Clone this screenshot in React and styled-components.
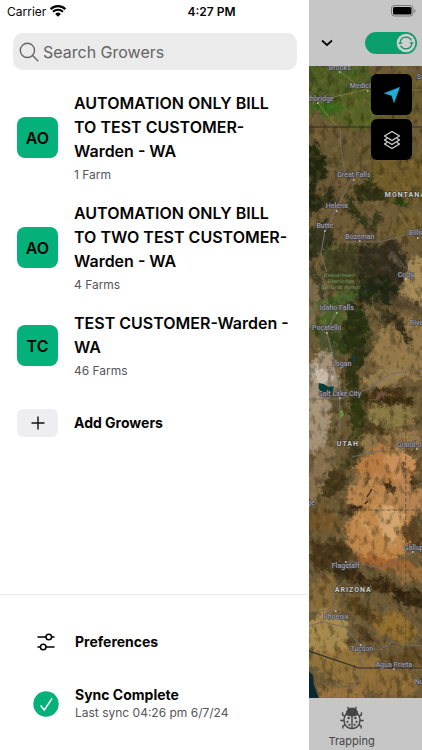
import React, { useState } from "react";
import styled, { createGlobalStyle } from "styled-components";

const growers = [
  { initials: "AO", name: "AUTOMATION ONLY BILL TO TEST CUSTOMER-Warden - WA", farms: "1 Farm" },
  { initials: "AO", name: "AUTOMATION ONLY BILL TO TWO TEST CUSTOMER-Warden - WA", farms: "4 Farms" },
  { initials: "TC", name: "TEST CUSTOMER-Warden - WA", farms: "46 Farms" },
];

// [name, x, y, text-anchor]
const cities = [
  ["Brooks", 31, 4, "middle"],
  ["Lethbridge", 25, 35, "end"],
  ["Medicine Hat", 41, 22, "start"],
  ["Swift Current", 108, 13, "start"],
  ["Great Falls", 45, 111, "middle"],
  ["Helena", 28, 142, "middle"],
  ["Butte", 16, 162, "middle"],
  ["Bozeman", 51, 173, "middle"],
  ["Billings", 100, 169, "start"],
  ["Cody", 97, 211, "middle"],
  ["Idaho Falls", 28, 244, "middle"],
  ["Pocatello", 18, 264, "middle"],
  ["Riverton", 101, 259, "start"],
  ["Logan", 33, 300, "middle"],
  ["Salt Lake City", 31, 330, "middle"],
  ["Grand Junction", 88, 381, "start"],
  ["St. George", 6, 439, "end"],
  ["Gallup", 95, 484, "start"],
  ["Flagstaff", 37, 502, "middle"],
  ["Phoenix", 27, 553, "middle"],
  ["Tucson", 53, 585, "middle"],
  ["Agua Prieta", 85, 601, "middle"],
  ["Nuevo Casas", 106, 618, "start"],
];

const states = [
  ["MONTANA", 76, 131],
  ["UTAH", 28, 380],
  ["ARIZONA", 26, 526],
];

const dots = [
  [31, 6], [9, 37], [59, 25], [45, 114], [28, 145], [16, 165], [51, 175], [109, 172],
  [97, 213], [28, 247], [18, 267], [32, 302], [31, 332], [108, 383], [104, 486],
  [37, 496], [27, 545], [52, 579], [85, 603],
];

// [cx, cy, rx, ry, fill, opacity, rotation]
const terrain = [
  [22, 16, 44, 28, "#4f5e24", 1, 0],
  [50, 46, 34, 18, "#546224", 0.9, 0],
  [95, 30, 30, 30, "#675a2c", 0.9, 0],
  [18, 42, 16, 5, "#336a1a", 0.9, 0],
  [40, 8, 12, 4, "#3e6420", 0.8, 0],
  [60, 88, 55, 24, "#665832", 1, 0],
  [95, 112, 34, 26, "#705c2a", 1, 0],
  [5, 100, 13, 20, "#20270f", 0.95, 0],
  [60, 126, 20, 9, "#2c3014", 0.95, 10],
  [62, 110, 6, 4, "#2b4313", 0.8, 0],
  [92, 136, 9, 5, "#2b4313", 0.95, 0],
  [4, 132, 8, 16, "#1c240f", 0.9, 0],
  [20, 132, 8, 12, "#2a2b17", 0.95, 30],
  [44, 143, 4, 13, "#2a3115", 0.9, -30],
  [54, 152, 3, 10, "#2a3115", 0.8, -30],
  [68, 156, 5, 14, "#2b3216", 0.8, 0],
  [10, 176, 12, 20, "#2c3019", 0.9, 30],
  [22, 186, 4, 15, "#5b6b2c", 0.7, 30],
  [38, 200, 24, 22, "#383b1f", 0.85, 0],
  [74, 200, 26, 26, "#2f2b1d", 0.95, 20],
  [70, 226, 20, 16, "#1f2815", 0.95, 0],
  [88, 194, 12, 3, "#7d705c", 0.6, 35],
  [108, 215, 15, 24, "#a48b59", 0.95, 0],
  [94, 236, 16, 9, "#4f4030", 0.8, 20],
  [100, 160, 18, 16, "#74602f", 0.8, 0],
  [6, 238, 14, 30, "#7b6b4d", 0.9, 0],
  [8, 216, 4, 20, "#35361f", 0.8, -20],
  [30, 234, 24, 8, "#46602a", 0.9, -20],
  [16, 258, 20, 9, "#465f26", 0.9, -40],
  [46, 270, 14, 36, "#232e12", 0.95, 0],
  [20, 280, 16, 20, "#46502a", 0.8, 0],
  [30, 276, 3, 14, "#2a3a14", 0.9, -20],
  [74, 250, 9, 18, "#514728", 0.8, -35],
  [95, 284, 34, 30, "#957a4c", 0.95, 0],
  [90, 262, 5, 19, "#2e2a18", 0.95, -38],
  [67, 246, 2, 14, "#a08a63", 0.6, -30],
  [5, 290, 8, 12, "#6f5b37", 0.9, 0],
  [14, 316, 16, 30, "#a19079", 1, 0],
  [12, 310, 8, 10, "#cbc1b3", 0.9, -15],
  [8, 360, 13, 34, "#ab977d", 0.9, 0],
  [28, 336, 6, 16, "#584e31", 0.9, 0],
  [46, 312, 8, 40, "#2c3313", 0.95, 0],
  [78, 312, 22, 8, "#977e50", 0.9, -20],
  [80, 332, 28, 8, "#37290f", 0.95, 3],
  [70, 331, 12, 3, "#75533f", 0.9, 0],
  [82, 350, 24, 10, "#8d7c47", 0.9, 0],
  [50, 354, 8, 20, "#303711", 0.9, 0],
  [72, 366, 20, 4, "#49371b", 0.9, 20],
  [96, 374, 20, 10, "#9b7a4a", 0.9, 0],
  [62, 378, 10, 8, "#94784b", 0.9, 0],
  [23, 380, 7, 40, "#675a39", 0.8, 10],
  [42, 388, 6, 18, "#433d1e", 0.9, 10],
  [8, 406, 12, 30, "#8a7150", 0.9, 20],
  [78, 404, 32, 22, "#b87b42", 1, 0],
  [90, 398, 16, 13, "#cc9560", 0.8, 0],
  [60, 428, 20, 20, "#bd8750", 0.95, 0],
  [97, 432, 24, 20, "#b98653", 0.95, 0],
  [55, 415, 3, 5, "#46341c", 0.8, 0],
  [94, 400, 3, 4, "#3d3018", 0.9, 0],
  [80, 420, 9, 4, "#332611", 0.9, 30],
  [109, 416, 4, 8, "#3c311b", 0.9, 0],
  [26, 418, 10, 18, "#403318", 0.9, 25],
  [43, 442, 14, 3, "#3c2a16", 0.8, -10],
  [14, 454, 17, 14, "#735429", 0.9, 0],
  [70, 466, 34, 30, "#bf874a", 1, 10],
  [82, 460, 10, 22, "#d9ad79", 0.8, -20],
  [56, 462, 5, 18, "#d0a267", 0.7, -25],
  [104, 468, 8, 14, "#54391d", 0.8, 0],
  [22, 490, 20, 16, "#453218", 0.9, 0],
  [76, 496, 30, 7, "#a5632f", 0.9, 10],
  [104, 508, 16, 8, "#9b6e3c", 0.9, 0],
  [40, 508, 20, 7, "#30230f", 0.9, 5],
  [76, 522, 26, 8, "#35250f", 0.9, 20],
  [102, 534, 22, 8, "#2f220f", 0.9, 15],
  [12, 532, 20, 20, "#8a6c3a", 0.9, 0],
  [54, 544, 20, 6, "#523b1b", 0.9, 35],
  [84, 560, 24, 12, "#96702f", 0.9, 20],
  [18, 568, 24, 20, "#ad8e50", 0.9, 0],
  [58, 568, 12, 4, "#46331a", 0.8, 40],
  [40, 600, 42, 16, "#94733c", 0.9, 10],
  [96, 590, 20, 6, "#5f4822", 0.9, 0],
  [78, 618, 34, 12, "#8f6d39", 0.9, 0],
  [35, 626, 24, 7, "#9b7440", 0.9, 0],
];

const GlobalStyle = createGlobalStyle`
  * {
    box-sizing: border-box;
  }
  body {
    margin: 0;
    font-family: Inter, "Liberation Sans", sans-serif;
    color: #050505;
    background-color: #ffffff;
  }
  button, input {
    font: inherit;
    color: inherit;
  }
  ul {
    margin: 0;
    padding: 0;
  }
`;

const Screen = styled.div`
  position: relative;
  display: grid;
  grid-template-columns: minmax(0, 11fr) minmax(0, 4fr);
  min-height: 100vh;
`;

const StatusBar = styled.div`
  position: absolute;
  top: 0;
  left: 0;
  right: 0;
  z-index: 2;
  display: grid;
  grid-template-columns: 1fr auto 1fr;
  align-items: center;
  height: 22px;
  padding: 0 6px 0 7px;
  font-size: 12px;
`;

const Carrier = styled.span`
  display: flex;
  align-items: center;
  gap: 4px;
`;

const Clock = styled.span`
  font-weight: 600;
`;

const Battery = styled.svg`
  justify-self: end;
`;

const Drawer = styled.aside`
  display: flex;
  flex-direction: column;
  padding-top: 33px;
  background-color: #ffffff;
`;

const SearchBox = styled.label`
  display: flex;
  align-items: center;
  gap: 4px;
  height: 37px;
  margin: 0 12px 21px 13px;
  padding: 0 6px;
  border-radius: 10px;
  background-color: #ebebeb;
  color: #636366;
`;

const SearchInput = styled.input`
  flex: 1;
  min-width: 0;
  padding: 0;
  border: 0;
  outline: 0;
  background: none;
  font-size: 16px;

  &::placeholder {
    color: #636366;
    opacity: 1;
  }
`;

const GrowerList = styled.ul`
  display: flex;
  flex-direction: column;
  gap: 17px;
  list-style: none;
`;

const RowButton = styled.button`
  display: flex;
  align-items: center;
  gap: 16px;
  width: 100%;
  padding: 0 16px 0 17px;
  border: 0;
  background: none;
  text-align: left;
  cursor: pointer;
`;

const Avatar = styled.span`
  display: flex;
  flex: none;
  align-items: center;
  justify-content: center;
  width: 41px;
  height: 41px;
  border-radius: 8px;
  background-color: #04b17b;
  font-size: 16px;
  font-weight: 600;
`;

const AddBadge = styled(Avatar)`
  height: 28px;
  border-radius: 6px;
  background-color: #eeeef0;
`;

const GrowerName = styled.span`
  display: block;
  font-size: 16px;
  font-weight: 600;
  line-height: 24px;
`;

const Label = styled.span`
  display: block;
  font-size: 14px;
  font-weight: 700;
  line-height: 18px;
`;

const Detail = styled.span`
  display: block;
  margin-top: ${(props) => (props.$spaced ? "3px" : "0")};
  color: #55555a;
  font-size: 12px;
  line-height: 18px;
`;

const AddRow = styled(RowButton)`
  margin-top: 29px;
`;

const DrawerFooter = styled.footer`
  display: flex;
  flex-direction: column;
  gap: 31px;
  margin-top: auto;
  padding: 34px 0 28px 16px;
  border-top: 1px solid #ececec;
`;

const FooterRow = styled(RowButton)`
  min-height: 26px;
`;

const FooterIcon = styled.span`
  display: flex;
  flex: none;
  width: 26px;
  justify-content: center;
`;

const MapSide = styled.main`
  display: flex;
  flex-direction: column;
  min-width: 0;
  background-color: #c6c6c6;
`;

const MapHeader = styled.header`
  display: flex;
  align-items: center;
  justify-content: space-between;
  height: 66px;
  padding: 20px 5px 0 8px;
`;

const IconButton = styled.button`
  display: flex;
  padding: 4px 3px;
  border: 0;
  background: none;
  cursor: pointer;
`;

const Switch = styled.label`
  position: relative;
  display: flex;
`;

const SwitchInput = styled.input`
  appearance: none;
  width: 52px;
  height: 22px;
  margin: 0;
  border-radius: 11px;
  background-color: ${(props) => (props.checked ? "#0b9f6d" : "#8e8e93")};
  cursor: pointer;
`;

const Knob = styled.svg`
  position: absolute;
  top: 1px;
  left: ${(props) => (props.$on ? "31px" : "1px")};
  pointer-events: none;
`;

const MapArea = styled.section`
  position: relative;
  flex: 1;
  min-height: 400px;
  overflow: hidden;
  background-color: #6c5936;
`;

const MapCanvas = styled.svg`
  position: absolute;
  inset: 0;
  width: 100%;
  height: 100%;
  font-family: Roboto, "Liberation Sans", sans-serif;
`;

const MapControls = styled.div`
  position: absolute;
  top: 8px;
  right: 10px;
  display: flex;
  flex-direction: column;
  gap: 4px;
`;

const MapButton = styled.button`
  display: flex;
  align-items: center;
  justify-content: center;
  width: 41px;
  height: 41px;
  padding: 0;
  border: 0;
  border-radius: 6px;
  background-color: #000000;
  cursor: pointer;
`;

const TabBar = styled.nav`
  display: flex;
  height: 52px;
  padding-left: 19px;
`;

const Tab = styled.a`
  display: flex;
  flex-direction: column;
  align-items: center;
  padding-top: 8px;
  color: #454545;
  font-size: 11px;
  line-height: 14px;
  text-decoration: none;
  gap: 4px;
`;

const WifiIcon = () => (
  <svg width="16" height="12" viewBox="0 0 16 12" aria-hidden="true">
    <path d="M.6 4.2a10.6 10.6 0 0 1 14.8 0" fill="none" stroke="#000" strokeWidth="2.3" />
    <path d="M3 6.8a7.2 7.2 0 0 1 10 0" fill="none" stroke="#000" strokeWidth="2" />
    <path d="M5.2 8.9a4 4 0 0 1 5.6 0L8 11.7z" fill="#000" />
  </svg>
);

const SearchIcon = () => (
  <svg width="20" height="20" viewBox="0 0 20 20" fill="none" stroke="#636366" strokeWidth="1.4" aria-hidden="true">
    <circle cx="8.4" cy="8.4" r="7.1" />
    <path d="M13.6 13.6l5.2 5.2" strokeLinecap="round" />
  </svg>
);

const SlidersIcon = () => (
  <svg width="18" height="18" viewBox="0 0 18 18" fill="none" stroke="#000" strokeWidth="1.5" aria-hidden="true">
    <path d="M1 4h8M14.6 4H17M1 14h2.4M9 14h8" strokeLinecap="round" />
    <circle cx="11.8" cy="4" r="2.8" />
    <circle cx="6.2" cy="14" r="2.8" />
  </svg>
);

const SyncedIcon = () => (
  <svg width="26" height="26" viewBox="0 0 26 26" fill="none" aria-hidden="true">
    <circle cx="13" cy="13" r="12.7" fill="#04b17b" />
    <path d="M7.6 14.4l3.7 4.5 7.8-11.6" stroke="#fff" strokeWidth="1.5" />
  </svg>
);

const BugIcon = () => (
  <svg width="24" height="24" viewBox="0 0 24 24" fill="none" stroke="#454545" strokeWidth="1.4" aria-hidden="true">
    <path d="M6.6 7.6C6.6 4.2 9 2.2 12 2.2s5.4 2 5.4 5.4c-3.400 1.400-7.400 1.400-10.800 0z" fill="#454545" />
    <path d="M9 3.4L7.6.8M15 3.4L16.4.8" />
    <path d="M5.8 8.4C3.6 12 3.6 16.5 5.8 19.6c3 4 9.4 4 12.4 0 2.200-3.100 2.200-7.600 0-11.200-4 1.700-8.400 1.700-12.400 0z" />
    <path d="M12 9.5v13M4.9 10.4L2.6 8.8V6.200M19.100 10.400l2.300-1.600V6.200M4.200 14.500H.3M19.800 14.500h3.900M5.400 18.600l-2.600 1.600v2.400M18.600 18.600l2.600 1.600v2.400" />
    <g fill="#454545" stroke="none">
      <circle cx="8.6" cy="12" r="1.2" />
      <circle cx="15.4" cy="12" r="1.2" />
      <circle cx="7.4" cy="15.8" r="1.1" />
      <circle cx="16.6" cy="15.8" r="1.1" />
      <circle cx="9.4" cy="18.8" r="1.1" />
      <circle cx="14.6" cy="18.8" r="1.1" />
    </g>
  </svg>
);

function SatelliteMap() {
  return (
    <MapCanvas viewBox="0 0 113 632" preserveAspectRatio="xMidYMin slice" role="img" aria-label="Satellite map">
      <defs>
        <filter id="relief" x="-20%" y="-5%" width="140%" height="110%" colorInterpolationFilters="sRGB">
          <feGaussianBlur stdDeviation="1.5" result="soft" />
          <feTurbulence type="fractalNoise" baseFrequency="0.05" numOctaves="2" seed="8" result="wide" />
          <feDisplacementMap in="soft" in2="wide" scale="18" xChannelSelector="R" yChannelSelector="G" result="bent" />
          <feTurbulence type="fractalNoise" baseFrequency="0.2" numOctaves="3" seed="5" result="fine" />
          <feDisplacementMap in="bent" in2="fine" scale="12" xChannelSelector="R" yChannelSelector="G" />
          <feGaussianBlur stdDeviation="0.6" />
        </filter>
        <filter id="shade" x="0" y="0" width="100%" height="100%" colorInterpolationFilters="sRGB">
          <feTurbulence type="fractalNoise" baseFrequency="0.16 0.1" numOctaves="4" seed="3" />
          <feColorMatrix values="0 0 0 0 0.11  0 0 0 0 0.09  0 0 0 0 0.02  4 0 0 0 -2" />
          <feGaussianBlur stdDeviation="0.6" />
        </filter>
        <filter id="light" x="0" y="0" width="100%" height="100%" colorInterpolationFilters="sRGB">
          <feTurbulence type="fractalNoise" baseFrequency="0.15" numOctaves="4" seed="21" />
          <feColorMatrix values="0 0 0 0 0.85  0 0 0 0 0.66  0 0 0 0 0.38  0 4 0 0 -2" />
          <feGaussianBlur stdDeviation="0.6" />
        </filter>
      </defs>
      <rect width="113" height="632" fill="#6c5936" />
      <g filter="url(#relief)">
        <rect x="-20" y="-20" width="153" height="672" fill="#6c5936" />
        {terrain.map(([cx, cy, rx, ry, fill, opacity, turn], i) => (
          <ellipse
            key={i}
            cx={cx}
            cy={cy}
            rx={rx}
            ry={ry}
            fill={fill}
            opacity={opacity}
            transform={`rotate(${turn} ${cx} ${cy})`}
          />
        ))}
      </g>
      <rect width="113" height="632" filter="url(#shade)" opacity="0.35" />
      <rect width="113" height="632" filter="url(#light)" opacity="0.14" />

      <path d="M10 317l5 1 5 3 5-1-1 8-5 3-5-4-4-4z" fill="#073f38" />
      <path d="M31 345l3-1 1 5-3 4z" fill="#5f9a35" />
      <path d="M44 288l3 2-1 8-2-3z" fill="#173a4c" />
      <path d="M41 442l5-1 3 1 4-2M56 438l3-3M58 431l3-4 2-4" fill="none" stroke="#2d1c10" strokeWidth="1.2" />
      <path d="M0 605l4 4 1 9 5 14H0z" fill="#0a2a30" />

      <g fill="none" stroke="#746d64" strokeWidth="1.2" opacity="0.9">
        <path d="M32 64v16l4 28M45 108l-17 34-12 24-4 22 6 18" />
        <path d="M36 176h34l20-5 23-8" />
        <path d="M28 246l-10 20 6 24 7 34v40" />
        <path d="M0 333h31l28-10 22-15 32-4" />
        <path d="M43 391l26-6 20 1 10-9 14-4" />
        <path d="M37 496h10l23 6 14-6 29-15" />
        <path d="M0 545h27l9 16 16 19 19 4 12-8 14 3 16 1" />
        <path d="M0 560l14-4 22 5M26 545v-26M52 580v32l-10 10-16-2" />
      </g>
      <path d="M9 37l16-6 34-8M9 37l18 22M31 6l14 10 5 6M102 24h11" fill="none" stroke="#8c813f" strokeWidth="0.8" />
      <path d="M0 61h113" stroke="#2e2c22" strokeWidth="1" />
      <path d="M0 585l50 17h63" fill="none" stroke="#302b26" strokeWidth="1.2" />
      <path d="M76 324h37M97 324v254M0 444h113M90 197h23" fill="none" stroke="#574d3b" strokeWidth="0.8" strokeDasharray="4 2" />

      <g fill="#bdb9af">
        {dots.map(([x, y]) => (
          <circle key={`${x}-${y}`} cx={x} cy={y} r="0.9" />
        ))}
      </g>
      <g fontSize="7" fontWeight="500" fill="#a09ea2" stroke="#3a3a42" strokeWidth="1" paintOrder="stroke">
        {cities.map(([name, x, y, anchor]) => (
          <text key={name} x={x} y={y} textAnchor={anchor}>
            {name}
          </text>
        ))}
      </g>
      <g fontSize="6" fontStyle="italic" fill="#6a9156" textAnchor="middle">
        <text x="31" y="211">Beaverhead-</text>
        <text x="32" y="217">Deerlodge</text>
        <text x="32" y="223">National Forest</text>
      </g>
      <g fontSize="7" fontWeight="700" fill="#cfcecb" stroke="#2b2a27" strokeWidth="1" paintOrder="stroke" letterSpacing="1">
        {states.map(([name, x, y]) => (
          <text key={name} x={x} y={y}>
            {name}
          </text>
        ))}
      </g>
    </MapCanvas>
  );
}

function App() {
  const [search, setSearch] = useState("");
  const [autoSync, setAutoSync] = useState(true);

  const visible = growers.filter((grower) =>
    grower.name.toLowerCase().includes(search.toLowerCase())
  );

  return (
    <Screen>
      <GlobalStyle />
      <StatusBar>
        <Carrier>
          Carrier
          <WifiIcon />
        </Carrier>
        <Clock>4:27 PM</Clock>
        <Battery width="25" height="12" viewBox="0 0 25 12" aria-hidden="true">
          <rect x="0.5" y="0.5" width="21.5" height="10.5" rx="3" fill="none" stroke="#777" />
          <rect x="2" y="2" width="18.5" height="7.5" rx="1.5" fill="#000" />
          <path d="M23.3 4v4c1.500-.5 1.500-3.500 0-4z" fill="#777" />
        </Battery>
      </StatusBar>

      <Drawer>
        <SearchBox>
          <SearchIcon />
          <SearchInput
            type="text"
            aria-label="Search Growers"
            placeholder="Search Growers"
            value={search}
            onChange={(e) => setSearch(e.target.value)}
          />
        </SearchBox>
        <GrowerList>
          {visible.map((grower) => (
            <li key={grower.name}>
              <RowButton type="button">
                <Avatar>{grower.initials}</Avatar>
                <span>
                  <GrowerName>{grower.name}</GrowerName>
                  <Detail $spaced>{grower.farms}</Detail>
                </span>
              </RowButton>
            </li>
          ))}
        </GrowerList>
        <AddRow type="button">
          <AddBadge>
            <svg width="14" height="14" viewBox="0 0 14 14" stroke="#111" strokeWidth="1.4" aria-hidden="true">
              <path d="M7 .5v13M.5 7h13" />
            </svg>
          </AddBadge>
          <Label>Add Growers</Label>
        </AddRow>
        <DrawerFooter>
          <FooterRow type="button">
            <FooterIcon>
              <SlidersIcon />
            </FooterIcon>
            <Label>Preferences</Label>
          </FooterRow>
          <FooterRow type="button">
            <FooterIcon>
              <SyncedIcon />
            </FooterIcon>
            <span>
              <Label>Sync Complete</Label>
              <Detail>Last sync 04:26 pm 6/7/24</Detail>
            </span>
          </FooterRow>
        </DrawerFooter>
      </Drawer>

      <MapSide>
        <MapHeader>
          <IconButton type="button" aria-label="Choose season">
            <svg width="14" height="8" viewBox="0 0 14 8" fill="none" stroke="#000" strokeWidth="1.7" aria-hidden="true">
              <path d="M2 1.5l5 4.500 5-4.500" />
            </svg>
          </IconButton>
          <Switch>
            <SwitchInput
              type="checkbox"
              role="switch"
              aria-label="Auto sync"
              checked={autoSync}
              onChange={(e) => setAutoSync(e.target.checked)}
            />
            <Knob $on={autoSync} width="20" height="20" viewBox="0 0 20 20" fill="none" aria-hidden="true">
              <circle cx="10" cy="10" r="9.3" fill="#cfcfcf" />
              <path d="M4.3 8.2A6 6 0 0 1 15.4 7.5M15.7 11.8A6 6 0 0 1 4.6 12.5" stroke="#0b8f63" strokeWidth="1.2" />
              <path d="M2.3 11l1.900-2.900L6.600 10.500zM17.700 9l-1.900 2.900-2.400-2.400z" fill="#0b8f63" />
            </Knob>
          </Switch>
        </MapHeader>
        <MapArea>
          <SatelliteMap />
          <MapControls>
            <MapButton type="button" aria-label="My location">
              <svg width="16" height="16" viewBox="0 0 16 16" aria-hidden="true">
                <path d="M15.5.4L10 15.6 7.8 8.4.4 6.3z" fill="#22acd4" stroke="#22acd4" strokeWidth="0.6" strokeLinejoin="round" />
              </svg>
            </MapButton>
            <MapButton type="button" aria-label="Map layers">
              <svg width="18" height="20" viewBox="0 0 18 20" fill="none" stroke="#d4d4d4" strokeWidth="1.3" strokeLinejoin="round" aria-hidden="true">
                <path d="M9 1.5l7.500 4.500L9 10.500 1.500 6z" />
                <path d="M4.3 8.200L1.500 10 9 14.500l7.500-4.500-2.800-1.800" />
                <path d="M4.3 12.200L1.500 14 9 18.500l7.500-4.500-2.800-1.800" />
              </svg>
            </MapButton>
          </MapControls>
        </MapArea>
        <TabBar>
          <Tab href="#trapping">
            <BugIcon />
            Trapping
          </Tab>
        </TabBar>
      </MapSide>
    </Screen>
  );
}

export default App;
